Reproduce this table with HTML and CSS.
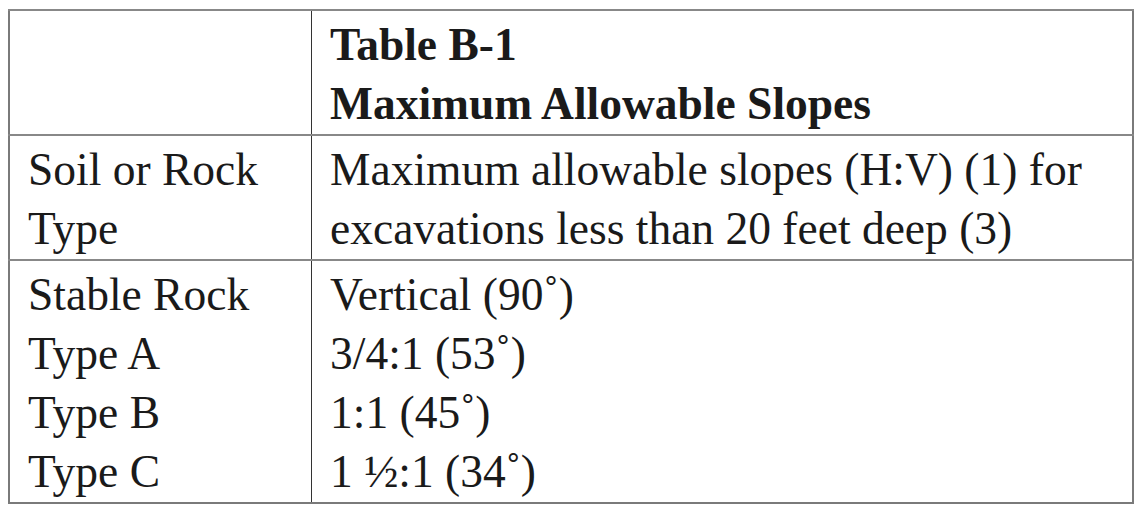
FILE: index.html
```html
<!DOCTYPE html>
<html>
<head>
<meta charset="utf-8">
<link rel="stylesheet" href="styles.css">
</head>
<body>
<table class="slopes">
  <tr>
    <td class="col-type"></td>
    <td class="col-slope head">Table B-1<br>Maximum Allowable Slopes</td>
  </tr>
  <tr>
    <td class="col-type">Soil or Rock<br>Type</td>
    <td class="col-slope">Maximum allowable slopes (H:V) (1) for<br>excavations less than 20 feet deep (3)</td>
  </tr>
  <tr>
    <td class="col-type">Stable Rock<br>Type A<br>Type B<br>Type C</td>
    <td class="col-slope">Vertical (90˚)<br>3/4:1 (53˚)<br>1:1 (45˚)<br>1 ½:1 (34˚)</td>
  </tr>
</table>
</body>
</html>
```
FILE: styles.css
```css
html, body {
  margin: 0;
  background: #fff;
}
body {
  padding: 9px 6px 0 8px;
  font-family: "Liberation Serif", "Times New Roman", serif;
  color: #1a1a1a;
}
.slopes {
  width: 1126px;
  border-collapse: collapse;
  border: 2px solid #7a7a7a;
  font-size: 45.5px;
  line-height: 59px;
}
.slopes td {
  vertical-align: top;
  padding: 4px 18px 1px 18px;
  border-top: 2px solid #888;
}
.slopes .col-type {
  width: 265px;
  border-right: 1px solid #333;
}
.slopes .head {
  font-weight: bold;
}
```
